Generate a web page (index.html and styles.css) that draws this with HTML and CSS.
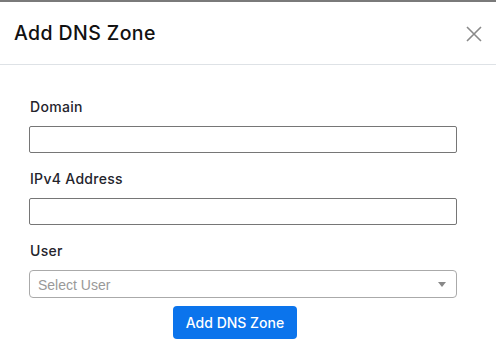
FILE: index.html
```html
<!DOCTYPE html>
<html>
<head>
<meta charset="utf-8">
<link rel="stylesheet" href="styles.css">
</head>
<body>
<div class="modal">
  <div class="modal-header">
    <h5 class="modal-title">Add DNS Zone</h5>
    <button class="close" aria-label="Close">
      <svg width="16" height="16" viewBox="0 0 16 16"><path d="M1 1L15 15M15 1L1 15" stroke="#8a8a8a" stroke-width="1.6" fill="none"/></svg>
    </button>
  </div>
  <div class="modal-body">
    <div class="form-group">
      <label class="form-label">Domain</label>
      <input class="form-input" type="text">
    </div>
    <div class="form-group">
      <label class="form-label">IPv4 Address</label>
      <input class="form-input" type="text">
    </div>
    <div class="form-group">
      <label class="form-label">User</label>
      <div class="select">
        <span class="select-placeholder">Select User</span>
        <span class="select-arrow"></span>
      </div>
    </div>
    <div class="actions">
      <button class="btn-primary">Add DNS Zone</button>
    </div>
  </div>
</div>
</body>
</html>
```
FILE: styles.css
```css
* { box-sizing: border-box; }
html, body { margin: 0; padding: 0; background: #fff; }
body { font-family: "Inter", "Noto Sans", sans-serif; color: #212529; }
.modal { border-top: 2px solid #7a7a7a; width: 496px; }
.modal-header {
  height: 63px;
  display: flex;
  align-items: center;
  justify-content: space-between;
  padding: 0 14px;
  border-bottom: 1px solid #dee2e6;
}
.modal-title { margin: 0; font-size: 19.5px; font-weight: 500; color: #111; letter-spacing: 0.4px; }
.close { background: none; border: 0; padding: 0; width: 16px; height: 16px; display: flex; margin-top: 2px; }
.modal-body { padding: 31px 39px 0 29px; }
.form-group { display: flex; flex-direction: column; margin-bottom: 15px; }
.form-label { font-size: 14px; font-weight: 500; line-height: 21px; margin: 0 0 9px 1px; color: #24242c; letter-spacing: 0.3px; }
.form-input { height: 27px; border: 1px solid #767676; border-radius: 2px; width: 100%; }
.select {
  height: 28px; border: 1px solid #aaa; border-radius: 4px; display: flex; align-items: center;
  justify-content: space-between; padding: 1px 10px 0 8px;
}
.select-placeholder { font-family: "Liberation Sans", Arial, sans-serif; font-size: 14px; color: #999; }
.select-arrow { width: 0; height: 0; border-style: solid; border-width: 5px 4px 0 4px; border-color: #888 transparent transparent transparent; }
.form-group:nth-child(3) { margin-bottom: 8px; }
.actions { padding-left: 144px; }
.btn-primary {
  background: #0b74ec; color: #fff; border: 0; border-radius: 4px; height: 33px; width: 124px;
  font-family: "Inter", "Noto Sans", sans-serif; font-size: 14px; font-weight: 500; padding: 0;
}
```
